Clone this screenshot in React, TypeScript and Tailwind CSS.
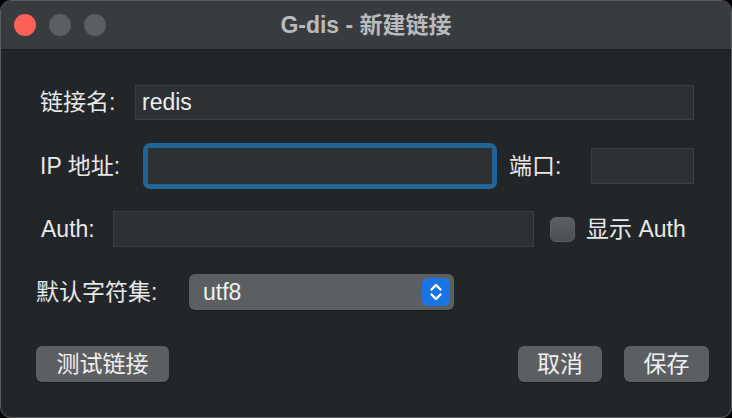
import React from "react";

const font = "font-['Liberation_Sans','Noto_Sans_CJK_SC',sans-serif]";

function TrafficLights() {
  return (
    <div className="flex items-center gap-[13px] pl-[13px]">
      <span className="h-[22px] w-[22px] rounded-full bg-[#fe5f57]" />
      <span className="h-[22px] w-[22px] rounded-full bg-[#5c5f62]" />
      <span className="h-[22px] w-[22px] rounded-full bg-[#5c5f62]" />
    </div>
  );
}

function TextBox({ value = "", className = "" }: { value?: string; className?: string }) {
  return (
    <div
      className={`flex items-center border border-[#3c3f42] bg-[#2e3134] pl-[6px] text-[23px] leading-none text-[#ececec] ${className}`}
    >
      {value}
    </div>
  );
}

function Button({ label, className = "" }: { label: string; className?: string }) {
  return (
    <button
      className={`flex h-[36px] items-center justify-center rounded-[6px] bg-[#5c5f62] text-[23px] leading-none text-[#f0f0f0] shadow-[0_1px_1px_rgba(0,0,0,0.35)] ${className}`}
    >
      {label}
    </button>
  );
}

function Stepper() {
  return (
    <div className="flex h-[28px] w-[28px] items-center justify-center rounded-[6px] bg-[#1b74e4]">
      <svg width="18" height="24" viewBox="0 0 18 24" fill="none">
        <path d="M4.5 9.5 L9 5 L13.5 9.5" stroke="white" strokeWidth="2.4" strokeLinecap="round" strokeLinejoin="round" />
        <path d="M4.5 14.5 L9 19 L13.5 14.5" stroke="white" strokeWidth="2.4" strokeLinecap="round" strokeLinejoin="round" />
      </svg>
    </div>
  );
}

export default function App() {
  return (
    <div className={`h-[418px] w-[732px] bg-black ${font}`}>
      <div className="flex h-full w-full flex-col overflow-hidden rounded-[11px] border border-[#5b5e61] bg-[#232629]">
        <div className="grid h-[49px] shrink-0 grid-cols-[1fr_auto_1fr] items-center border-b border-[#1a1c1e] bg-[#393c3f]">
          <TrafficLights />
          <div className="text-[23px] font-bold leading-none text-[#b9bbbd]">G-dis - 新建链接</div>
          <div />
        </div>

        <div className="flex flex-col pl-[35px] pr-[22px] text-[23px] leading-none text-[#e8e8e8]">
          <div className="mt-[35px] flex h-[35px] items-center pl-[4px] pr-[15px]">
            <span className="w-[95px] shrink-0">链接名:</span>
            <TextBox value="redis" className="h-[35px] flex-1" />
          </div>

          <div className="mt-[23px] flex h-[46px] items-center pl-[4px] pr-[15px]">
            <span className="w-[103px] shrink-0">IP 地址:</span>
            <div className="flex-1 rounded-[7px] bg-[#1f6598] p-[5px]">
              <div className="h-[36px] bg-[#2e3134]" />
            </div>
            <span className="ml-[12px] w-[82px] shrink-0">端口:</span>
            <TextBox className="h-[36px] w-[103px]" />
          </div>

          <div className="mt-[22px] flex h-[36px] items-center pl-[5px] pr-[15px]">
            <span className="w-[72px] shrink-0">Auth:</span>
            <TextBox className="h-[36px] flex-1" />
            <label className="ml-[16px] flex w-[144px] shrink-0 items-center">
              <span className="h-[25px] w-[25px] rounded-[6px] border border-[#5e6164] bg-gradient-to-b from-[#5d6063] to-[#4b4e51]" />
              <span className="ml-[11px]">显示 Auth</span>
            </label>
          </div>

          <div className="mt-[27px] flex h-[36px] items-center">
            <span className="w-[153px] shrink-0">默认字符集:</span>
            <div className="flex h-[36px] w-[265px] items-center justify-between rounded-[6px] bg-[#5c5f62] pl-[14px] pr-[4px] text-[#f0f0f0] shadow-[0_1px_1px_rgba(0,0,0,0.35)]">
              <span>utf8</span>
              <Stepper />
            </div>
          </div>

          <div className="mt-[36px] flex items-center justify-between">
            <Button label="测试链接" className="w-[133px]" />
            <div className="flex gap-[22px]">
              <Button label="取消" className="w-[84px]" />
              <Button label="保存" className="w-[85px]" />
            </div>
          </div>
        </div>
      </div>
    </div>
  );
}
